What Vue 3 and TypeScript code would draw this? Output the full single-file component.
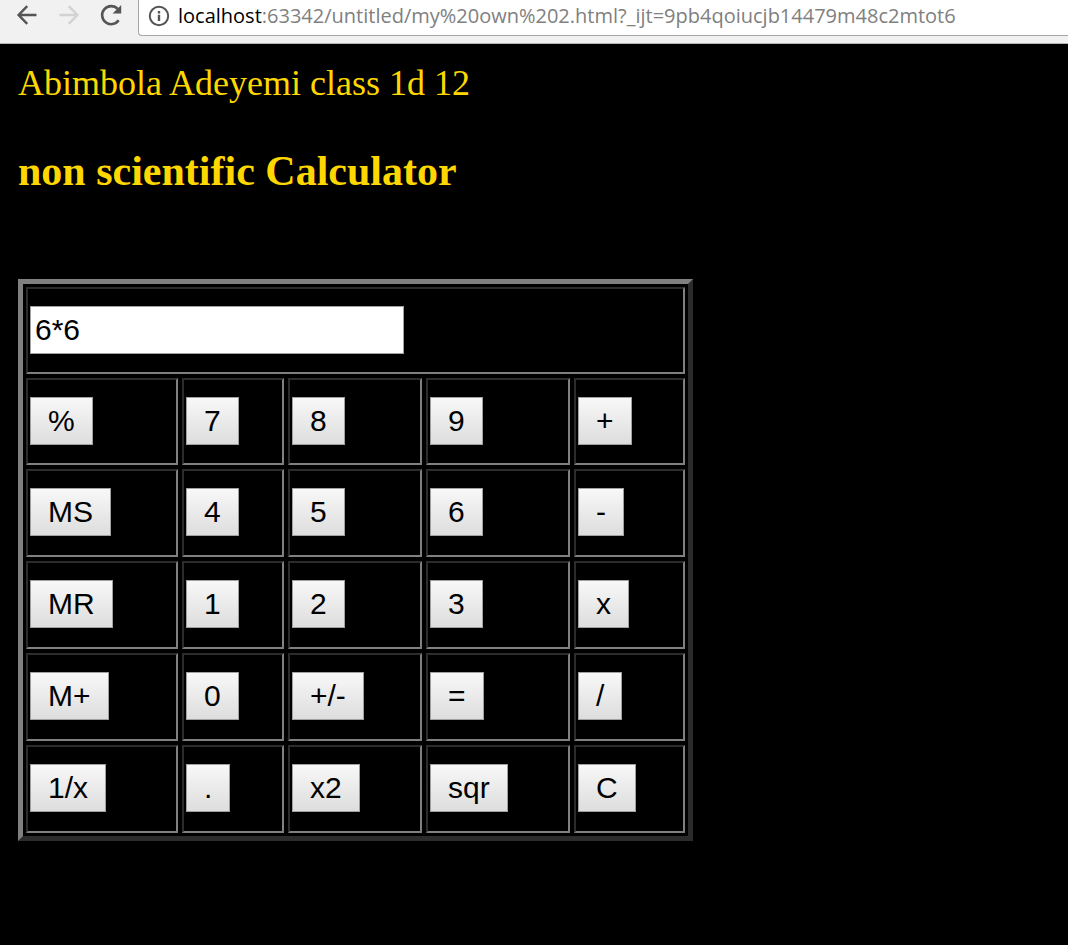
<script setup lang="ts">
import { ref } from 'vue'

const display = ref('6*6')
const path = ref(':63342/untitled/my%20own%202.html?_ijt=9pb4qoiucjb14479m48c2mtot6')

const rows: string[][] = [
  ['%', '7', '8', '9', '+'],
  ['MS', '4', '5', '6', '-'],
  ['MR', '1', '2', '3', 'x'],
  ['M+', '0', '+/-', '=', '/'],
  ['1/x', '.', 'x2', 'sqr', 'C'],
]

function press(key: string) {
  display.value = key === 'C' ? '' : display.value + key
}
</script>

<template>
  <div class="page">
    <header class="toolbar">
      <nav class="nav">
        <button type="button" class="nav-button" aria-label="Back">
          <svg viewBox="0 0 30 30" fill="none" stroke="#555" stroke-width="2.4">
            <path d="M24.5 15H7M15.2 6.2L6.6 15l8.6 8.8" />
          </svg>
        </button>
        <button type="button" class="nav-button" aria-label="Forward" disabled>
          <svg viewBox="0 0 30 30" fill="none" stroke="#d2d2d2" stroke-width="2.4">
            <path d="M5.5 15H23M14.8 6.2l8.6 8.8l-8.6 8.8" />
          </svg>
        </button>
        <button type="button" class="nav-button" aria-label="Reload">
          <svg viewBox="0 0 30 30">
            <path d="M22.6 20.2A9 9 0 1 1 21.6 8.9" fill="none" stroke="#555" stroke-width="2.6" />
            <path d="M25.2 5v8.6h-8.6z" fill="#555" />
          </svg>
        </button>
      </nav>
      <div class="address">
        <svg class="info" viewBox="0 0 22 22">
          <circle cx="11" cy="11" r="9.2" fill="none" stroke="#555" stroke-width="2" />
          <path d="M9.8 9.8h2.4v6.2H9.8zM9.8 6h2.4v2.4H9.8z" fill="#555" />
        </svg>
        <label class="host" for="address">localhost</label>
        <input id="address" v-model="path" class="path" type="text" spellcheck="false" />
      </div>
    </header>

    <main class="content">
      <p class="author">Abimbola Adeyemi class 1d 12</p>
      <h3 class="title">non scientific Calculator</h3>
      <div class="frame">
        <table class="calculator">
          <colgroup>
            <col class="c1" />
            <col class="c2" />
            <col class="c3" />
            <col class="c4" />
            <col class="c5" />
          </colgroup>
          <tbody>
            <tr>
              <td colspan="5">
                <input v-model="display" class="display" type="text" aria-label="Display" />
              </td>
            </tr>
            <tr v-for="(row, i) in rows" :key="i">
              <td v-for="key in row" :key="key">
                <button type="button" class="key" @click="press(key)">{{ key }}</button>
              </td>
            </tr>
          </tbody>
        </table>
      </div>
    </main>
  </div>
</template>

<style>
body {
  background: #000;
}
</style>

<style scoped>
.page {
  min-height: 100vh;
  background: #000;
  color: #ffd700;
  font-family: "Liberation Serif", "Times New Roman", serif;
  overflow-x: hidden;
}

.toolbar {
  display: flex;
  align-items: flex-start;
  height: 44px;
  box-sizing: border-box;
  background: #f1f1f1;
  border-bottom: 1px solid #b6b6b6;
}

.nav {
  display: flex;
  gap: 12px;
  padding: 0 12px;
}

.nav-button {
  width: 30px;
  height: 30px;
  padding: 0;
  border: 0;
  background: none;
}

.nav-button svg {
  display: block;
  width: 30px;
  height: 30px;
}

.address {
  flex: 1;
  min-width: 0;
  display: flex;
  align-items: center;
  height: 36px;
  box-sizing: border-box;
  padding: 0 0 4px 9px;
  background: #fff;
  border: 1px solid #a6a6a6;
  border-width: 0 0 1px 1px;
  border-radius: 0 0 0 4px;
  font: 20px/28px "Open Sans", sans-serif;
}

.info {
  flex: none;
  width: 22px;
  height: 22px;
  margin-right: 8px;
}

.host {
  color: #000;
}

.path {
  flex: 1;
  min-width: 0;
  padding: 0;
  border: 0;
  outline: 0;
  background: none;
  color: #808080;
  font: inherit;
}

.content {
  padding: 18px;
}

.author {
  margin: 0;
  font-size: 36px;
  line-height: 42px;
}

.title {
  margin: 43px 0 83px;
  font-size: 42px;
  line-height: 49px;
}

.frame {
  max-width: 675px;
  box-sizing: border-box;
  border: 5px solid;
  border-color: #808080 #2c2c2c #2c2c2c #808080;
}

.calculator {
  width: calc(100% + 2px);
  margin: -1px;
  table-layout: fixed;
  border-spacing: 4px;
}

.c1 { width: 152px; }
.c2 { width: 102px; }
.c3 { width: 134px; }
.c4 { width: 144px; }
.c5 { width: 111px; }

td {
  height: 88px;
  box-sizing: border-box;
  padding: 17px 2px;
  border: 2px solid;
  border-color: #2c2c2c #808080 #808080 #2c2c2c;
  vertical-align: top;
}

tr:nth-child(-n + 2) td {
  height: 87px;
}

.display,
.key {
  display: block;
  height: 48px;
  box-sizing: border-box;
  border: 1px solid #a0a0a0;
  border-radius: 0;
  color: #000;
  font: 30px/34px "Liberation Sans", Arial, sans-serif;
}

.display {
  width: 374px;
  max-width: 100%;
  padding: 0 4px;
  background: #fff;
}

.key {
  padding: 0 17px;
  background: linear-gradient(#f8f8f8, #dddddd);
}
</style>
